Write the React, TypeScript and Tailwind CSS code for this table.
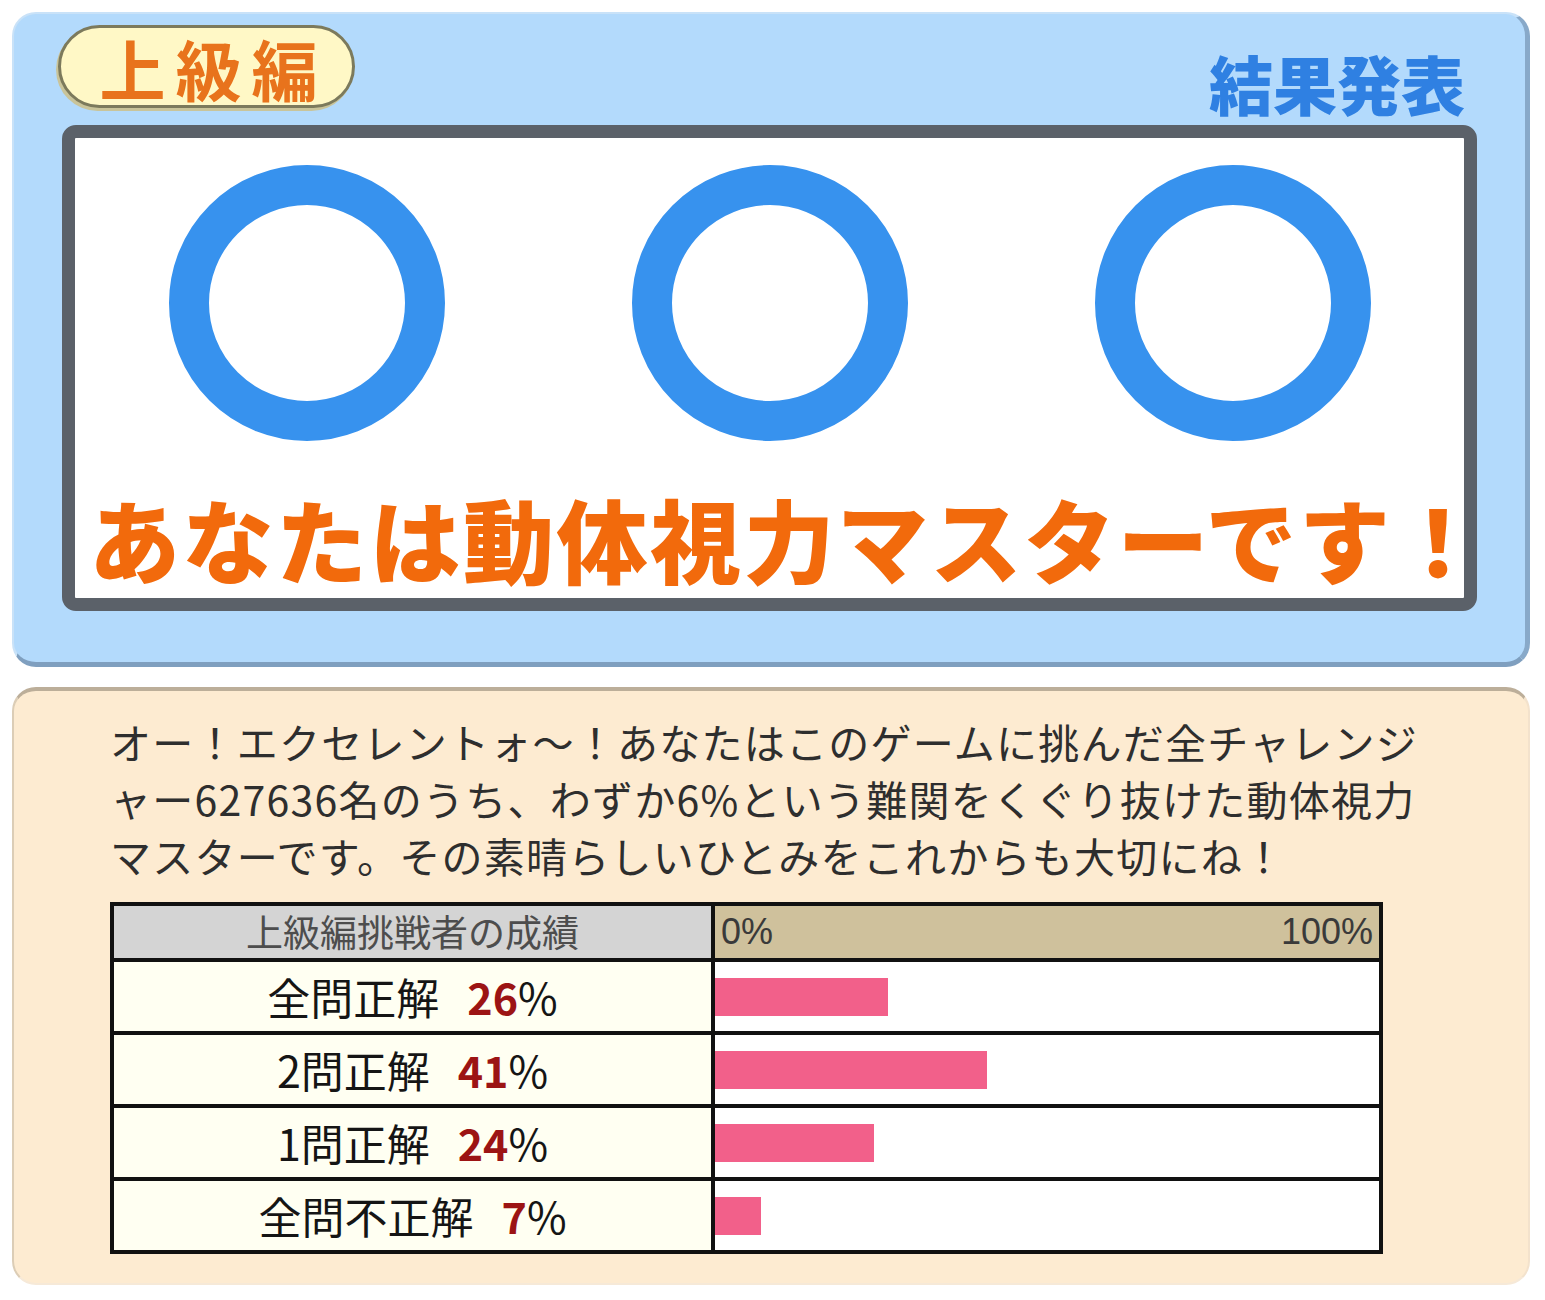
const JP = "font-['Noto_Sans_CJK_JP','Noto_Sans',sans-serif]";

const rows = [
  { label: "全問正解", pct: 26 },
  { label: "2問正解", pct: 41 },
  { label: "1問正解", pct: 24 },
  { label: "全問不正解", pct: 7 },
];

function Ring() {
  return (
    <div className="flex justify-center">
      <div className="h-[276px] w-[276px] rounded-full border-[40px] border-[#3792ee]" />
    </div>
  );
}

export default function App() {
  return (
    <div className={`flex h-[1300px] w-[1545px] flex-col gap-[20px] bg-white pl-[12px] pt-[12px] ${JP}`}>
      {/* result card */}
      <div className="flex h-[655px] w-[1518px] flex-col rounded-[24px] border-t-2 border-l-2 border-r-[5px] border-b-[5px] border-t-[#c9e2f8] border-l-[#c9e2f8] border-r-[#88a9c9] border-b-[#7f9fbf] bg-[#b3dafc]">
        <div className="flex h-[111px] items-start justify-between pl-[44px] pr-[60px]">
          <div className="mt-[11px] flex h-[83px] w-[297px] items-center justify-center rounded-full border-[3px] border-[#7c7a5c] bg-[#fff8c6] pl-[14px] shadow-[-2px_3px_0_#c9c49a]">
            <span className="text-[66px] leading-none font-bold tracking-[10px] text-[#e8731c]">上級編</span>
          </div>
          <span className="mt-[36px] text-[64px] leading-none font-black text-[#2f80e2]">結果発表</span>
        </div>
        <div className="mx-[48px] rounded-[14px] border-[13px] border-[#5b6169] bg-white">
          <div className="grid grid-cols-3 pt-[27px]">
            <Ring />
            <Ring />
            <Ring />
          </div>
          <div className="mt-[50px] pb-[15px] pl-[14px] text-center text-[91px] leading-[92px] font-black tracking-[2.5px] whitespace-nowrap text-[#f26a0c]">
            あなたは動体視力マスターです！
          </div>
        </div>
      </div>

      {/* comment and stats */}
      <div className="flex h-[598px] w-[1518px] flex-col rounded-[24px] border-t-4 border-l-2 border-r-2 border-b-2 border-t-[#bcae99] border-l-[#dccdb6] border-r-[#f3e2cc] border-b-[#f6e9d8] bg-[#fdebd1] pl-[96px] pt-[22px]">
        <p className="text-[41px] leading-[57px] tracking-[1.25px] whitespace-nowrap text-[#2e2e2e]">
          オー！エクセレントォ～！あなたはこのゲームに挑んだ全チャレンジ
          <br />
          ャー627636名のうち、わずか6%という難関をくぐり抜けた動体視力
          <br />
          マスターです。その素晴らしいひとみをこれからも大切にね！
        </p>

        <div className="mt-[18px] w-[1273px] border-4 border-[#111]">
          <div className="flex h-[52px]">
            <div className="flex w-[597px] items-center justify-center bg-[#d4d4d4] text-[37px] text-[#4d4d4d]">
              上級編挑戦者の成績
            </div>
            <div className="flex flex-1 items-center justify-between border-l-4 border-[#111] bg-[#cfc19c] px-[6px] font-['Liberation_Sans',sans-serif] text-[36px] text-[#3a3a3a]">
              <span>0%</span>
              <span>100%</span>
            </div>
          </div>
          {rows.map((r) => (
            <div key={r.label} className="flex h-[73px] border-t-4 border-[#111]">
              <div className="flex w-[597px] items-center justify-center gap-[28px] bg-[#fffff2] text-[43px] text-[#151515]">
                <span>{r.label}</span>
                <span>
                  <span className="font-bold text-[#9c1414]">{r.pct}</span>%
                </span>
              </div>
              <div className="flex flex-1 items-center border-l-4 border-[#111] bg-white">
                <div className="h-[38px] bg-[#f2608a]" style={{ width: `${r.pct}%` }} />
              </div>
            </div>
          ))}
        </div>
      </div>
    </div>
  );
}
